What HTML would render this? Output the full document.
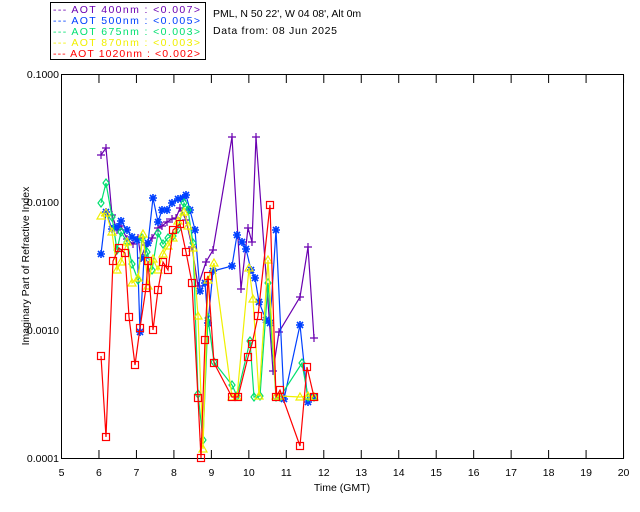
<!DOCTYPE html>
<html><head><meta charset="utf-8"><style>
body{margin:0;background:#fff;width:640px;height:512px;overflow:hidden}
svg{display:block;font-family:"Liberation Sans",sans-serif}
</style></head><body>
<svg id="s" width="640" height="512" viewBox="0 0 640 512" xml:space="preserve">
<rect x="50.5" y="2.5" width="155" height="57" fill="#fff" stroke="#000"/>
<g font-size="10.5">
<text x="53" y="13" fill="#6a00b0" textLength="147" lengthAdjust="spacing">---  AOT   400nm : &lt;0.007&gt;</text>
<text x="53" y="24" fill="#0040ff" textLength="147" lengthAdjust="spacing">---  AOT   500nm : &lt;0.005&gt;</text>
<text x="53" y="35" fill="#00e070" textLength="147" lengthAdjust="spacing">---  AOT   675nm : &lt;0.003&gt;</text>
<text x="53" y="46" fill="#f0f000" textLength="147" lengthAdjust="spacing">---  AOT   870nm : &lt;0.003&gt;</text>
<text x="53" y="57" fill="#ff0000" textLength="147" lengthAdjust="spacing">---  AOT 1020nm : &lt;0.002&gt;</text>
</g>
<g font-size="10.5" fill="#000">
<text x="213" y="17">PML, N 50 22', W 04 08', Alt 0m</text>
<text x="213" y="34" textLength="124" lengthAdjust="spacing">Data from: 08 Jun 2025</text>
<text x="342" y="491" text-anchor="middle">Time (GMT)</text>
<text transform="translate(29,266) rotate(-90)" text-anchor="middle">Imaginary Part of Refractive Index</text>
<g text-anchor="end"><text x="59" y="78">0.1000</text><text x="59" y="206">0.0100</text><text x="59" y="334">0.0010</text><text x="59" y="462">0.0001</text></g>
</g>
<rect x="61.5" y="74.5" width="562" height="384" fill="none" stroke="#000"/>
<g id="ax" stroke="#000"></g>
<g id="d"></g>
</svg>
<script>
var ns="http://www.w3.org/2000/svg",ax=document.getElementById('ax'),d=document.getElementById('d'),s=document.getElementById('s');
function el(t,a,p){var e=document.createElementNS(ns,t);for(var k in a)e.setAttribute(k,a[k]);(p||d).appendChild(e);return e;}
for(var i=0;i<=15;i++){var x=61.5+i*37.47;el('line',{x1:x,y1:458,x2:x,y2:450},ax);el('line',{x1:x,y1:75,x2:x,y2:83},ax);
var t=el('text',{x:x,y:476,'text-anchor':'middle','font-size':'10.5',stroke:'none'},s);t.textContent=5+i;}
var S=[
['#6a00b0','+',[[101,155],[106,148],[112,215],[117,230],[121,226],[127,239],[133,244],[138,238],[141,258],[146,245],[152,238],[158,228],[162,226],[167,222],[172,219],[176,218],[180,208],[186,220],[192,247],[198,286],[206,262],[213,250],[232,137],[241,289],[248,228],[252,242],[256,137],[273,371],[279,332],[300,297],[308,247],[314,338]]],
['#0040ff','*',[[101,254],[106,212],[112,229],[117,227],[121,221],[127,230],[132,237],[137,240],[140,332],[144,258],[148,243],[153,198],[158,222],[162,210],[167,210],[172,203],[178,199],[183,198],[186,195],[190,210],[195,230],[200,291],[205,283],[208,323],[213,271],[232,266],[237,235],[242,242],[246,249],[251,270],[255,278],[259,302],[266,320],[270,323],[276,230],[284,399],[300,325],[308,402],[314,397]]],
['#00e070','d',[[101,203],[106,183],[112,217],[117,250],[121,232],[127,242],[132,264],[138,280],[142,238],[147,252],[152,270],[158,233],[163,244],[168,238],[173,236],[178,229],[184,203],[188,210],[193,243],[198,394],[203,440],[208,318],[214,362],[232,385],[237,396],[250,341],[254,397],[260,396],[268,283],[276,397],[280,397],[302,363],[308,397],[314,397]]],
['#f0f000','^',[[101,216],[106,213],[112,232],[117,270],[121,262],[127,242],[132,283],[138,278],[143,234],[148,286],[153,259],[158,270],[163,254],[168,246],[173,238],[178,221],[184,212],[188,226],[193,248],[198,316],[203,449],[208,280],[214,263],[232,397],[237,397],[249,268],[253,299],[259,396],[268,260],[276,396],[280,396],[300,397],[308,396],[314,397]]],
['#ff0000','s',[[101,356],[106,437],[113,261],[119,248],[125,253],[129,317],[135,365],[140,328],[146,288],[148,261],[153,330],[158,290],[163,262],[168,270],[173,230],[180,224],[186,252],[192,283],[198,398],[201,458],[205,340],[208,276],[214,363],[232,397],[238,397],[248,357],[252,344],[258,316],[270,205],[276,397],[280,390],[300,446],[307,367],[314,397]]]];
S.forEach(function(r){var c=r[0],p=r[2];
el('polyline',{points:p.map(function(q){return q.join(',')}).join(' '),fill:'none',stroke:c,'stroke-width':1.2});
p.forEach(function(q){var x=q[0],y=q[1],m=r[1],a={fill:'none',stroke:c,'stroke-width':1.2};
if(m=='+'){el('path',Object.assign({d:'M'+(x-4)+' '+y+'h8M'+x+' '+(y-4)+'v8'},a));}
else if(m=='*'){el('path',{d:'M'+(x-4)+' '+y+'h8M'+x+' '+(y-4)+'v8M'+(x-3)+' '+(y-3)+'l6 6M'+(x-3)+' '+(y+3)+'l6 -6','stroke-width':1.6,fill:'none',stroke:c});}
else if(m=='d'){el('path',Object.assign({d:'M'+x+' '+(y-4)+'l3 4l-3 4l-3 -4z'},a));}
else if(m=='^'){el('path',Object.assign({d:'M'+x+' '+(y-4)+'l4 7h-8z'},a));}
else {el('rect',Object.assign({x:x-3.5,y:y-3.5,width:7,height:7},a));}
});});
</script>
</body></html>
